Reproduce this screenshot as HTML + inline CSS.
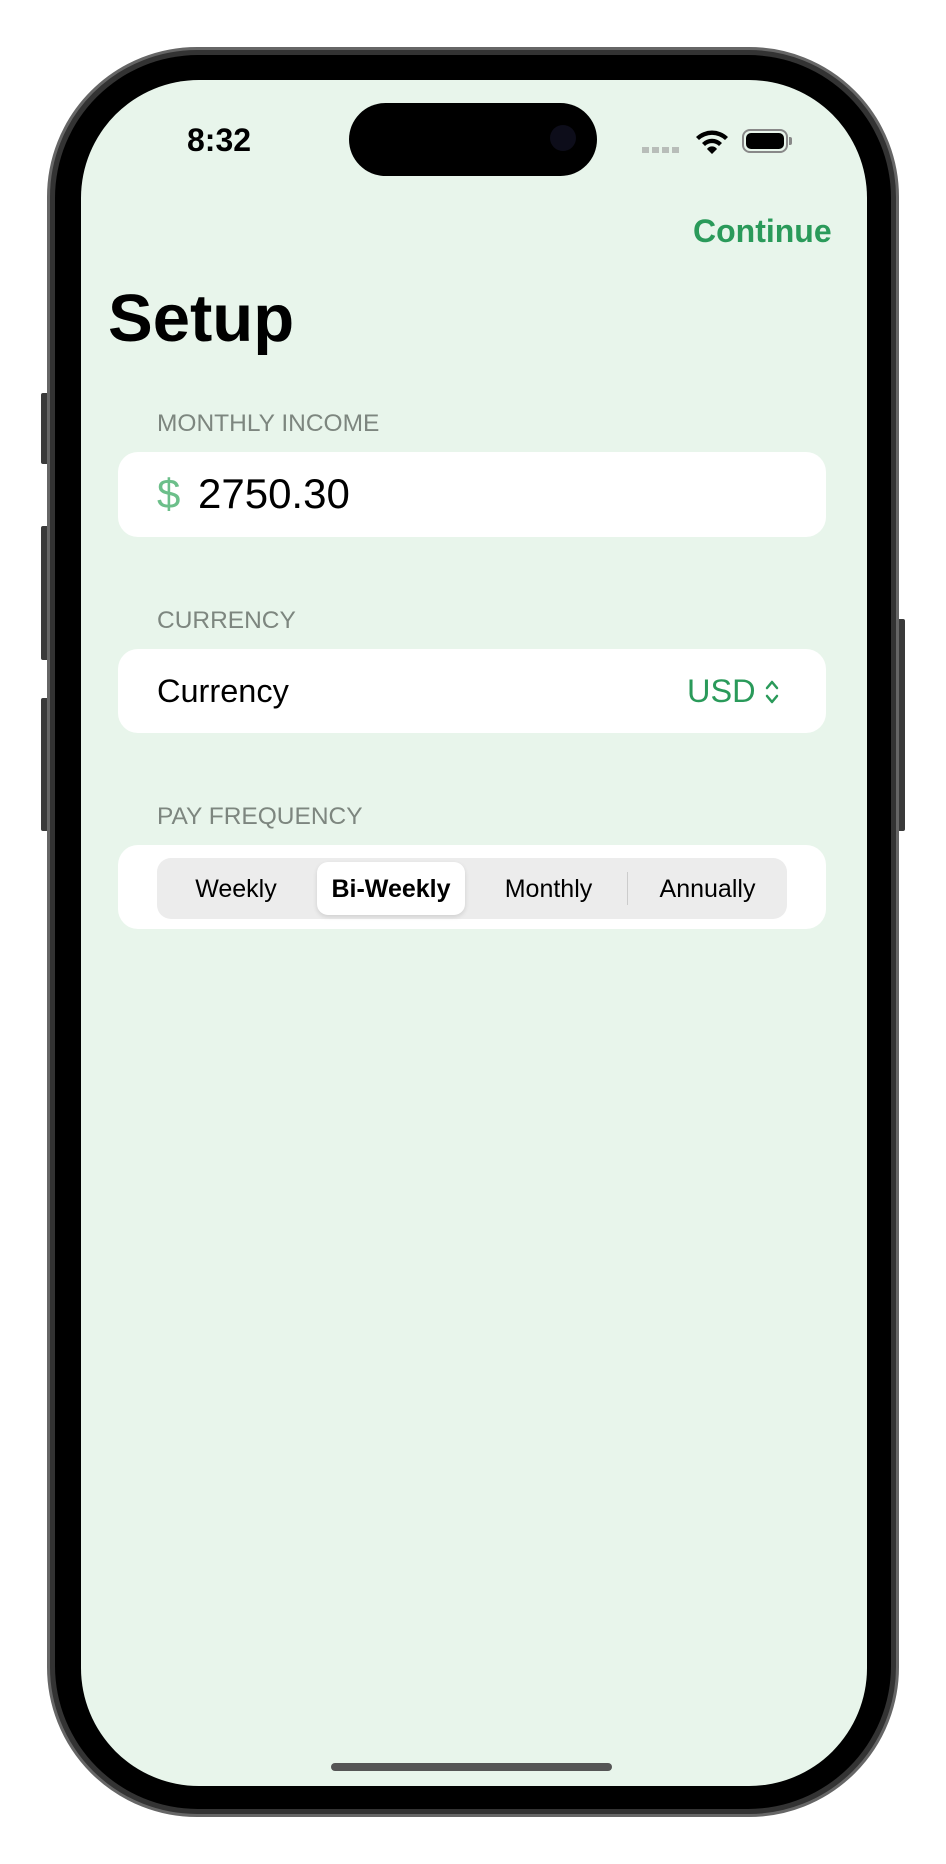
<!DOCTYPE html>
<html><head><meta charset="utf-8"><style>
*{margin:0;padding:0;box-sizing:border-box}
body{width:946px;height:1864px;background:#fff;position:relative;overflow:hidden;font-family:"Liberation Sans",sans-serif}
.abs{position:absolute}
.frame{left:47px;top:47px;width:852px;height:1770px;border-radius:150px;background:#333;border:3px solid #666}
.bezel{left:55px;top:55px;width:836px;height:1754px;border-radius:143px;background:#000}
.screen{left:81px;top:80px;width:786px;height:1706px;border-radius:118px;background:#e8f5eb;overflow:hidden}
.btn{background:#3a3a3a;border-radius:2px}
.lbl{color:#7d867f;font-size:24.5px;left:157px}
.card{left:118px;width:708px;background:#fff;border-radius:20px}
</style></head><body>
<div class="abs btn" style="left:41px;top:393px;width:8px;height:71px"></div>
<div class="abs btn" style="left:41px;top:526px;width:8px;height:134px"></div>
<div class="abs btn" style="left:41px;top:698px;width:8px;height:133px"></div>
<div class="abs btn" style="left:897px;top:619px;width:8px;height:212px"></div>
<div class="abs frame"></div>
<div class="abs bezel"></div>
<div class="abs screen"></div>
<div class="abs" style="left:349px;top:103px;width:248px;height:73px;border-radius:37px;background:#000"></div>
<div class="abs" style="left:550px;top:125px;width:26px;height:26px;border-radius:13px;background:#0d0d1a"></div>
<div class="abs" style="left:187px;top:122px;font-size:32px;font-weight:bold;color:#000">8:32</div>
<div class="abs" style="left:642px;top:147px;width:38px;height:6px;background:repeating-linear-gradient(90deg,#b8bdb9 0 7px,transparent 7px 10px)"></div>
<svg class="abs" style="left:694px;top:128px" width="36" height="28" viewBox="0 0 36 28"><path d="M2 9a23 23 0 0 1 32 0l-3 3a19 19 0 0 0-26 0z M8 15a14 14 0 0 1 20 0l-3 3a10 10 0 0 0-14 0z M13 21a6 6 0 0 1 10 0l-5 5z" fill="#000"/></svg>
<div class="abs" style="left:742px;top:129px;width:46px;height:24px;border:2px solid #888;border-radius:8px;padding:2px"><div style="width:100%;height:100%;background:#000;border-radius:5px"></div></div>
<div class="abs" style="left:789px;top:137px;width:3px;height:8px;background:#888;border-radius:0 2px 2px 0"></div>
<div class="abs" style="left:693px;top:213px;font-size:32px;font-weight:bold;color:#2a9a5a">Continue</div>
<div class="abs" style="left:108px;top:280px;font-size:67px;font-weight:bold;color:#000">Setup</div>
<div class="abs lbl" style="top:410px">MONTHLY INCOME</div>
<div class="abs card" style="top:452px;height:85px"></div>
<div class="abs" style="left:157px;top:470px;font-size:42px;color:#6cbf8a">$</div>
<div class="abs" style="left:198px;top:470px;font-size:42px;color:#000">2750.30</div>
<div class="abs lbl" style="top:607px">CURRENCY</div>
<div class="abs card" style="top:649px;height:84px"></div>
<div class="abs" style="left:157px;top:673px;font-size:32.5px;color:#000">Currency</div>
<div class="abs" style="left:687px;top:673px;font-size:32.5px;color:#2a9a5a">USD</div>
<svg class="abs" style="left:764px;top:678px" width="16" height="28" viewBox="0 0 16 28"><path d="M3 10l5-6 5 6M3 18l5 6 5-6" stroke="#2a9a5a" stroke-width="2.5" fill="none" stroke-linecap="round" stroke-linejoin="round"/></svg>
<div class="abs lbl" style="top:803px">PAY FREQUENCY</div>
<div class="abs card" style="top:845px;height:84px"></div>
<div class="abs" style="left:157px;top:858px;width:630px;height:61px;background:#ececec;border-radius:14px"></div>
<div class="abs" style="left:317px;top:862px;width:148px;height:53px;background:#fff;border-radius:11px;box-shadow:0 2px 5px rgba(0,0,0,.12)"></div>
<div class="abs" style="left:627px;top:872px;width:1px;height:33px;background:#ccc"></div>
<div class="abs" style="left:157px;top:875px;width:158px;text-align:center;font-size:25px">Weekly</div>
<div class="abs" style="left:317px;top:875px;width:148px;text-align:center;font-size:25px;font-weight:bold">Bi-Weekly</div>
<div class="abs" style="left:470px;top:875px;width:157px;text-align:center;font-size:25px">Monthly</div>
<div class="abs" style="left:628px;top:875px;width:159px;text-align:center;font-size:25px">Annually</div>
<div class="abs" style="left:331px;top:1763px;width:281px;height:8px;border-radius:4px;background:#555"></div>
</body></html>
